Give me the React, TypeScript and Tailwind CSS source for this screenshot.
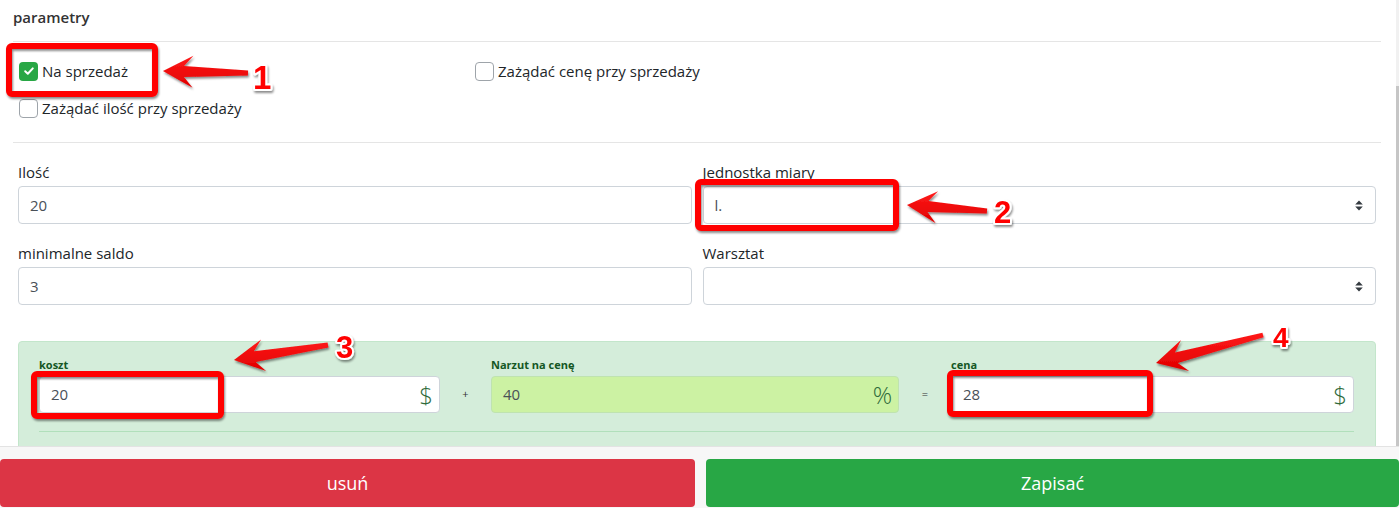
import React from "react";

function Check({ checked, label }: { checked?: boolean; label: string }) {
  return (
    <div className="flex h-[20px] items-center gap-[4px] px-[6px]">
      {checked ? (
        <span className="flex h-[19px] w-[19px] items-center justify-center rounded-[4px] bg-[#28a745]">
          <svg width="12" height="12" viewBox="0 0 12 12">
            <path d="M2.2 6.3 L4.8 8.8 L9.8 3.4" fill="none" stroke="#fff" strokeWidth="2" strokeLinecap="round" strokeLinejoin="round" />
          </svg>
        </span>
      ) : (
        <span className="h-[19px] w-[19px] rounded-[4px] border border-[#9ea4aa] bg-white" />
      )}
      <span className="text-[15px] leading-[20px] text-[#212529]">{label}</span>
    </div>
  );
}

function Caret() {
  return (
    <svg width="8" height="11" viewBox="0 0 8 11">
      <path d="M4 0.5 L7.8 4.5 H0.2 Z" fill="#343a40" />
      <path d="M0.2 6.5 H7.8 L4 10.5 Z" fill="#343a40" />
    </svg>
  );
}

function Field({ label, value, select }: { label: string; value: string; select?: boolean }) {
  return (
    <div className="flex flex-col">
      <div className="mb-[3px] text-[15px] leading-[22px] text-[#212529]">{label}</div>
      <div className="flex h-[38px] items-center justify-between rounded-[4px] border border-[#ced4da] bg-white pl-[11px] pr-[12px] text-[15px] text-[#495057]">
        <span>{value}</span>
        {select ? <Caret /> : null}
      </div>
    </div>
  );
}

function GroupInput({ label, value, addon, tinted, w }: { label: string; value: string; addon: string; tinted?: boolean; w: string }) {
  return (
    <div className={"flex flex-none flex-col " + w}>
      <div className="mb-[4px] text-[11px] font-bold leading-[14px] text-[#155724]">{label}</div>
      <div
        className={
          tinted
            ? "flex h-[37px] items-center justify-between rounded-[4px] border border-[#bfe3b0] bg-[#ccf2a3] pl-[11px] pr-[6px]"
            : "flex h-[37px] items-center justify-between rounded-[4px] border border-[#ced4da] bg-white pl-[11px] pr-[6px]"
        }
      >
        <span className="text-[15px] text-[#495057]">{value}</span>
        <span className="text-[24px] font-light leading-none text-[#2f6b3b]">{addon}</span>
      </div>
    </div>
  );
}

function arrowPoints(tx: number, ty: number, px: number, py: number, L = 30, W = 16, sh = 5.5, st = 2.4, notch = 9) {
  const dx = px - tx;
  const dy = py - ty;
  const len = Math.hypot(dx, dy);
  const ux = dx / len;
  const uy = dy / len;
  const nx = -uy;
  const ny = ux;
  const bx = px - ux * L;
  const by = py - uy * L;
  const jx = px - ux * (L - notch);
  const jy = py - uy * (L - notch);
  const pts = [
    [px, py],
    [bx + nx * W, by + ny * W],
    [jx + nx * sh, jy + ny * sh],
    [tx + nx * st, ty + ny * st],
    [tx - nx * st, ty - ny * st],
    [jx - nx * sh, jy - ny * sh],
    [bx - nx * W, by - ny * W],
  ];
  return pts.map((p) => p[0].toFixed(1) + "," + p[1].toFixed(1)).join(" ");
}

function Overlay() {
  const rects = [
    { x: 9, y: 46, w: 146, h: 48 },
    { x: 698, y: 182, w: 198, h: 46 },
    { x: 34, y: 374, w: 187, h: 42 },
    { x: 950, y: 373, w: 200, h: 41 },
  ];
  const arrows = [
    { tx: 248, ty: 73, px: 163, py: 71 },
    { tx: 987, ty: 211, px: 907, py: 205 },
    { tx: 328, ty: 345, px: 234, py: 360 },
    { tx: 1263, ty: 335, px: 1156, py: 363 },
  ];
  const nums = [
    { t: "1", x: 253, y: 89, s: 33 },
    { t: "2", x: 994, y: 223, s: 31 },
    { t: "3", x: 336, y: 358, s: 31 },
    { t: "4", x: 1273, y: 347, s: 28 },
  ];
  return (
    <svg className="pointer-events-none absolute left-0 top-0" width="1399" height="508" viewBox="0 0 1399 508">
      <defs>
        <filter id="sh" x="-20%" y="-20%" width="140%" height="140%">
          <feDropShadow dx="1" dy="2" stdDeviation="1.2" floodColor="#000" floodOpacity="0.45" />
        </filter>
        <linearGradient id="ag" x1="0" y1="0" x2="0" y2="1">
          <stop offset="0" stopColor="#ff1a1a" />
          <stop offset="1" stopColor="#e00000" />
        </linearGradient>
      </defs>
      {rects.map((r, i) => (
        <rect key={i} x={r.x} y={r.y} width={r.w} height={r.h} rx="3" fill="none" stroke="#ff0000" strokeWidth="6" filter="url(#sh)" />
      ))}
      {arrows.map((a, i) => (
        <polygon key={i} points={arrowPoints(a.tx, a.ty, a.px, a.py)} fill="url(#ag)" strokeLinejoin="round" filter="url(#sh)" />
      ))}
      {nums.map((n, i) => (
        <text
          key={i}
          x={n.x}
          y={n.y}
          fontFamily="'Liberation Sans', Arial, sans-serif"
          fontWeight="bold"
          fontSize={n.s}
          fill="#ff0000"
          stroke="#ffffff"
          strokeWidth="4"
          strokeLinejoin="round"
          paintOrder="stroke"
          filter="url(#sh)"
        >
          {n.t}
        </text>
      ))}
    </svg>
  );
}

export default function App() {
  return (
    <div className="relative h-[508px] w-[1399px] overflow-hidden bg-white font-['Open_Sans',sans-serif] text-[#212529]">
      <div className="flex h-[446px]">
        <div className="flex-1 overflow-hidden pl-[13px] pr-[15px]">
          <div className="h-[41px] pt-[7px] text-[15px] font-semibold leading-[20px] text-[#333]">parametry</div>
          <div className="border-t border-[#e5e5e5]" />
          <div className="grid grid-cols-3 gap-y-[17px] pb-[24px] pt-[19px]">
            <Check checked label="Na sprzedaż" />
            <Check label="Zażądać cenę przy sprzedaży" />
            <div />
            <Check label="Zażądać ilość przy sprzedaży" />
          </div>
          <div className="border-t border-[#e5e5e5]" />
          <div className="grid grid-cols-2 gap-x-[11px] gap-y-[18px] px-[5px] pt-[18px]">
            <Field label="Ilość" value="20" />
            <Field label="Jednostka miary" value="l." select />
            <Field label="minimalne saldo" value="3" />
            <Field label="Warsztat" value="" select />
          </div>
          <div className="mx-[5px] mt-[36px] h-[200px] rounded-[4px] border border-[#c3e6cb] bg-[#d4edda] pl-[20px] pr-[21px] pt-[16px]">
            <div className="flex items-end">
              <GroupInput label="koszt" value="20" addon="$" w="w-[401px]" />
              <div className="flex h-[37px] w-[51px] flex-none items-center justify-center text-[11px] text-[#333]">+</div>
              <GroupInput label="Narzut na cenę" value="40" addon="%" tinted w="w-[408px]" />
              <div className="flex h-[37px] w-[52px] flex-none items-center justify-center text-[11px] text-[#333]">=</div>
              <GroupInput label="cena" value="28" addon="$" w="w-[403px]" />
            </div>
            <div className="mt-[18px] border-t border-[#b1dfbb]" />
          </div>
        </div>
        <div className="flex w-[3px] flex-col bg-[#f1f1f1] pt-[86px]">
          <div className="flex-1 bg-[#c6c6c6]" />
        </div>
      </div>
      <div className="flex h-[62px] gap-[11px] border-t border-[#e3e3e3] bg-[#f7f7f7] pt-[12px]">
        <div className="flex h-[48px] w-[695px] flex-none items-center justify-center rounded-[4px] bg-[#dc3545] text-[18px] text-white">usuń</div>
        <div className="flex h-[48px] flex-1 items-center justify-center rounded-[4px] bg-[#28a745] text-[18px] text-white">Zapisać</div>
      </div>
      <Overlay />
    </div>
  );
}
